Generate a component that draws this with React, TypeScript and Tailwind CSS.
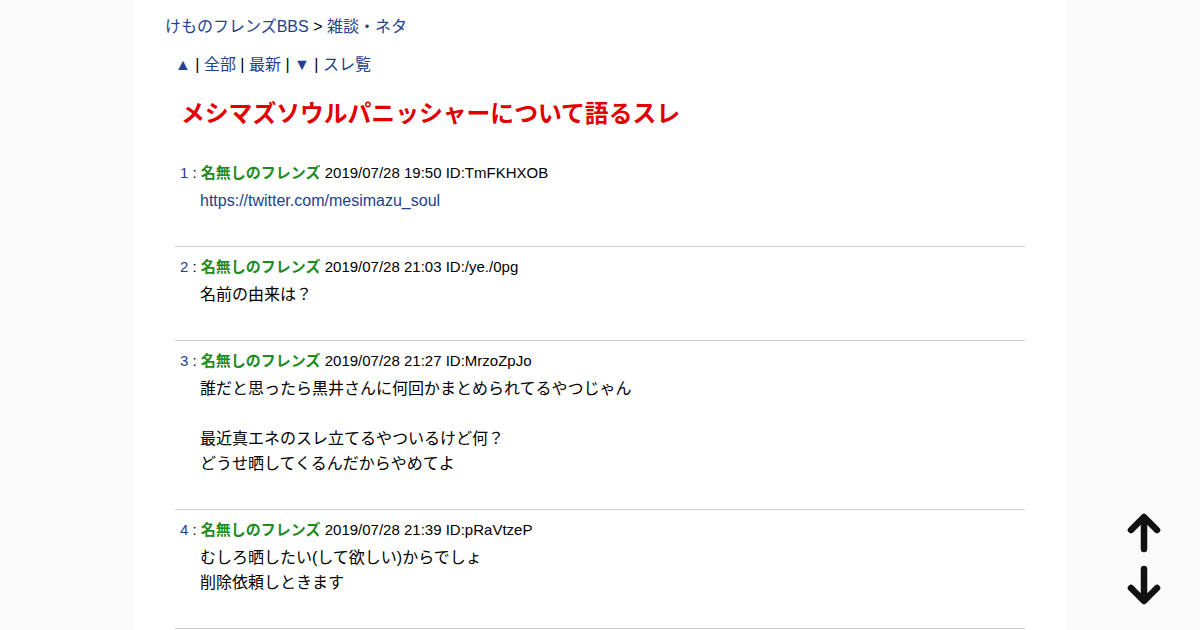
import React from "react";

const LINK = "text-[#23418f]";

type Post = { n: number; date: string; id: string; body: React.ReactNode };

const posts: Post[] = [
  {
    n: 1,
    date: "2019/07/28 19:50",
    id: "TmFKHXOB",
    body: <a className={LINK}>https://twitter.com/mesimazu_soul</a>,
  },
  { n: 2, date: "2019/07/28 21:03", id: "/ye./0pg", body: <>名前の由来は？</> },
  {
    n: 3,
    date: "2019/07/28 21:27",
    id: "MrzoZpJo",
    body: (
      <>
        誰だと思ったら黒井さんに何回かまとめられてるやつじゃん
        <br />
        <br />
        最近真エネのスレ立てるやついるけど何？
        <br />
        どうせ晒してくるんだからやめてよ
      </>
    ),
  },
  {
    n: 4,
    date: "2019/07/28 21:39",
    id: "pRaVtzeP",
    body: (
      <>
        むしろ晒したい(して欲しい)からでしょ
        <br />
        削除依頼しときます
      </>
    ),
  },
];

export default function App() {
  return (
    <div
      className="min-h-[630px] bg-[#fafafa] text-black"
      style={{ fontFamily: '"Liberation Sans", "Noto Sans CJK JP", sans-serif' }}
    >
      <div className="mx-auto w-[932px] min-h-[630px] bg-white px-[31px] pt-[15px]">
        <div className="text-[16px] leading-[24px]">
          <a className={LINK}>けものフレンズBBS</a> &gt; <a className={LINK}>雑談・ネタ</a>
        </div>
        <div className="px-[10px]">
          <div className="mt-[14px] text-[16px] leading-[24px]">
            <a className={LINK}>▲</a> | <a className={LINK}>全部</a> | <a className={LINK}>最新</a> |{" "}
            <a className={LINK}>▼</a> | <a className={LINK}>スレ覧</a>
          </div>
          <h1 className="mt-[21px] pl-[6px] text-[23.8px] leading-[32px] font-bold text-[#e00000]">
            メシマズソウルパニッシャーについて語るスレ
          </h1>
          <div className="mt-[31px]">
            {posts.map((p, i) => (
              <div key={p.n} className={i > 0 ? "border-t border-[#cccccc] pt-[8px]" : ""}>
                <div className="pl-[5px] text-[15px] leading-[24px]">
                  <span className={LINK}>{p.n}</span> :{" "}
                  <span className="font-bold text-[#1e8c1e]">名無しのフレンズ</span> {p.date} ID:{p.id}
                </div>
                <div className="mt-[3px] pl-[25px] pb-[33px] text-[16px] leading-[25px]">{p.body}</div>
              </div>
            ))}
            <div className="border-t border-[#cccccc]" />
          </div>
        </div>
      </div>
      <div className="fixed right-[38px] top-[512px] flex flex-col items-center gap-[10px]">
        <svg width="36" height="42" viewBox="0 0 36 42" fill="none" stroke="#111" strokeWidth="6.5" strokeLinecap="round" strokeLinejoin="round">
          <path d="M18 37V6M5 18L18 5L31 18" />
        </svg>
        <svg width="36" height="42" viewBox="0 0 36 42" fill="none" stroke="#111" strokeWidth="6.5" strokeLinecap="round" strokeLinejoin="round">
          <path d="M18 5V36M5 24L18 37L31 24" />
        </svg>
      </div>
    </div>
  );
}
